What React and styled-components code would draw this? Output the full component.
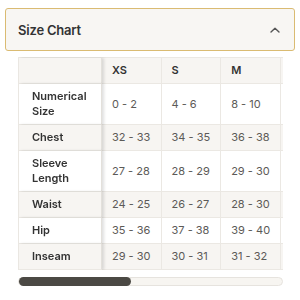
import { useLayoutEffect, useRef, useState } from "react";
import styled, { createGlobalStyle } from "styled-components";

const GlobalStyle = createGlobalStyle`
	body {
		margin: 0;
		background: #fff;
		font-family: Inter, "Liberation Sans", sans-serif;
	}
`;

const Page = styled.div`
	padding: 8px 5px 0;
`;

const AccordionHeader = styled.button`
	width: 100%;
	height: 43px;
	box-sizing: border-box;
	display: flex;
	align-items: center;
	justify-content: space-between;
	padding: 0 14px 0 12px;
	background: #f8f6f3;
	border: 1.5px solid #dabb72;
	border-radius: 3px;
	font-family: inherit;
	cursor: pointer;
`;

const Title = styled.span`
	font-size: 13px;
	font-weight: 600;
	color: #333;
	letter-spacing: -0.2px;
`;

const ChartWrap = styled.div`
	margin: 6px 12px 0 13px;
`;

const ScrollArea = styled.div`
	overflow-x: auto;
	scrollbar-width: none;

	&::-webkit-scrollbar {
		display: none;
	}
`;

const Track = styled.div`
	margin-top: 7px;
	height: 9px;
	box-sizing: border-box;
	background: #f7f5f1;
	border: 1px solid #e6e3de;
	border-radius: 5px;
	position: relative;
`;

const Thumb = styled.div`
	position: absolute;
	top: -1px;
	bottom: -1px;
	background: #4b4944;
	border-radius: 5px;
`;

const Table = styled.table`
	border-collapse: separate;
	border-spacing: 0;
	font-size: 11px;
	line-height: 15px;
	border-top: 1px solid #ebe8e3;
	border-left: 1px solid #ebe8e3;
`;

const Row = styled.tr`
	background: ${(props) => (props.$shaded ? "#f7f5f2" : "#fff")};
`;

const LabelCell = styled.th`
	position: sticky;
	left: 0;
	z-index: 1;
	width: 83px;
	min-width: 83px;
	max-width: 83px;
	box-sizing: border-box;
	padding: 5px 8px 5px 13px;
	text-align: left;
	font-weight: 600;
	color: #333;
	background: inherit;
	border-bottom: 1px solid #ebe8e3;
	border-right: 1px solid #e3e0db;
	box-shadow: 2px 0 3px rgba(0, 0, 0, 0.13);
`;

const SizeCell = styled.th`
	min-width: 59px;
	width: 59px;
	box-sizing: border-box;
	padding: 5px 10px;
	text-align: left;
	font-weight: 600;
	color: #333;
	white-space: nowrap;
	border-bottom: 1px solid #ebe8e3;
	border-right: 1px solid #ebe8e3;
`;

const ValueCell = styled.td`
	min-width: 59px;
	width: 59px;
	box-sizing: border-box;
	padding: 5px 10px;
	color: #5c5a57;
	white-space: nowrap;
	border-bottom: 1px solid #ebe8e3;
	border-right: 1px solid #ebe8e3;
`;

const sizes = ["XS", "S", "M", "L", "XL", "XXL", "1X", "2X", "3X"];

const rows = [
	{ label: "Numerical Size", values: ["0 - 2", "4 - 6", "8 - 10", "12 - 14", "16 - 18", "20 - 22", "14W", "16W", "18W"] },
	{ label: "Chest", values: ["32 - 33", "34 - 35", "36 - 38", "39 - 41", "42 - 44", "45 - 47", "44 - 46", "47 - 49", "50 - 52"] },
	{ label: "Sleeve Length", values: ["27 - 28", "28 - 29", "29 - 30", "30 - 31", "31 - 32", "32 - 33", "31 - 32", "32 - 33", "33 - 34"] },
	{ label: "Waist", values: ["24 - 25", "26 - 27", "28 - 30", "31 - 33", "34 - 36", "37 - 39", "36 - 38", "39 - 41", "42 - 44"] },
	{ label: "Hip", values: ["35 - 36", "37 - 38", "39 - 40", "41 - 43", "44 - 46", "47 - 49", "46 - 48", "49 - 51", "52 - 54"] },
	{ label: "Inseam", values: ["29 - 30", "30 - 31", "31 - 32", "31 - 32", "32 - 33", "32 - 33", "31 - 32", "31 - 32", "31 - 32"] },
];

function Chevron() {
	return (
		<svg width="10" height="6" viewBox="0 0 10 6" fill="none">
			<path d="M1 5L5 1.2L9 5" stroke="#555" strokeWidth="1.4" strokeLinecap="round" strokeLinejoin="round" />
		</svg>
	);
}

export default function App() {
	const scrollRef = useRef(null);
	const [thumb, setThumb] = useState({ width: 43, left: 0 });

	const measure = () => {
		const el = scrollRef.current;
		if (!el) return;
		const ratio = el.clientWidth / el.scrollWidth;
		setThumb({
			width: ratio * 100,
			left: (el.scrollLeft / el.scrollWidth) * 100,
		});
	};

	useLayoutEffect(measure, []);

	return (
		<Page>
			<GlobalStyle />
			<AccordionHeader>
				<Title>Size Chart</Title>
				<Chevron />
			</AccordionHeader>
			<ChartWrap>
				<ScrollArea ref={scrollRef} onScroll={measure}>
					<Table>
						<thead>
							<Row $shaded>
								<LabelCell />
								{sizes.map((s) => (
									<SizeCell key={s}>{s}</SizeCell>
								))}
							</Row>
						</thead>
						<tbody>
							{rows.map((row, i) => (
								<Row key={row.label} $shaded={i % 2 === 1}>
									<LabelCell>{row.label}</LabelCell>
									{row.values.map((v, j) => (
										<ValueCell key={j}>{v}</ValueCell>
									))}
								</Row>
							))}
						</tbody>
					</Table>
				</ScrollArea>
				<Track>
					<Thumb style={{ width: `${thumb.width}%`, left: `${thumb.left}%` }} />
				</Track>
			</ChartWrap>
		</Page>
	);
}
